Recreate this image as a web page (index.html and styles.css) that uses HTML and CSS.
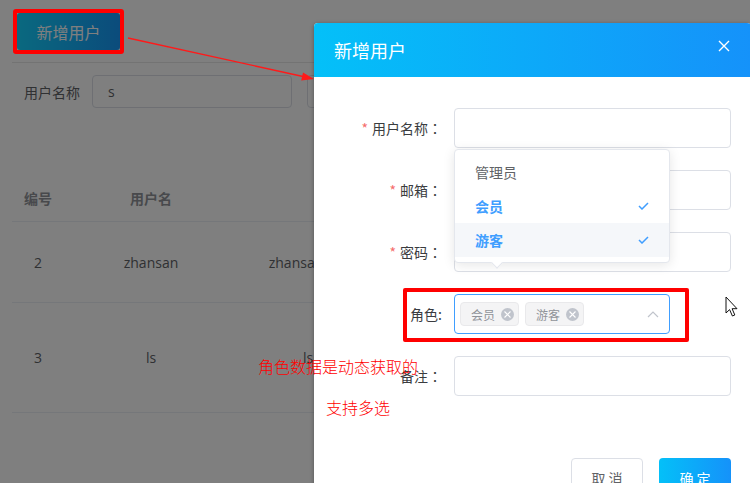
FILE: index.html
```html
<!DOCTYPE html>
<html lang="zh-CN">
<head>
<meta charset="utf-8">
<title>用户管理 - 新增用户</title>
<link rel="stylesheet" href="styles.css">
</head>
<body>
<div class="screen">
  <div class="page">
    <div class="toolbar">
      <button class="btn-add">新增用户</button>
    </div>
    <div class="filter">
      <span class="filter-label">用户名称</span>
      <div class="filter-input">s</div>
      <div class="filter-input filter-input-next"></div>
    </div>
    <div class="table">
      <div class="tr th">
        <div class="td c1">编号</div>
        <div class="td c2">用户名</div>
        <div class="td c3"></div>
      </div>
      <div class="tr row-a">
        <div class="td c1">2</div>
        <div class="td c2">zhansan</div>
        <div class="td c3">zhansan123</div>
      </div>
      <div class="tr row-b">
        <div class="td c1">3</div>
        <div class="td c2">ls</div>
        <div class="td c3">ls</div>
      </div>
    </div>
  </div>

  <div class="mask"></div>

  <div class="btn-box"></div>
  <svg class="annot-arrow" width="320" height="90" viewBox="0 0 320 90">
    <line x1="128" y1="38" x2="303" y2="76.5" stroke="#ff1a1a" stroke-width="1.3"/>
    <polygon points="314,79 301.2,80.4 303.0,72.4" fill="#ff1a1a"/>
  </svg>

  <div class="dialog">
    <div class="dialog-header">
      <span class="dialog-title">新增用户</span>
      <svg class="dialog-close" width="12" height="12" viewBox="0 0 12 12">
        <path d="M1 1 L11 11 M11 1 L1 11" stroke="#fff" stroke-width="1.4" fill="none"/>
      </svg>
    </div>
    <div class="dialog-body">
      <div class="form-item">
        <label class="form-label"><span class="req">*</span>用户名称<span class="colon" lang="zh-TW">：</span></label>
        <div class="form-content"><div class="input"></div></div>
      </div>
      <div class="form-item">
        <label class="form-label"><span class="req">*</span>邮箱<span class="colon" lang="zh-TW">：</span></label>
        <div class="form-content"><div class="input"></div></div>
      </div>
      <div class="form-item">
        <label class="form-label"><span class="req">*</span>密码<span class="colon" lang="zh-TW">：</span></label>
        <div class="form-content"><div class="input"></div></div>
      </div>
      <div class="form-item">
        <label class="form-label">角色:</label>
        <div class="form-content">
          <div class="select">
            <span class="tag">会员<span class="tag-close"><svg width="7" height="7" viewBox="0 0 7 7"><path d="M0.5 0.5 L6.5 6.5 M6.5 0.5 L0.5 6.5" stroke="#fff" stroke-width="1.1"/></svg></span></span>
            <span class="tag">游客<span class="tag-close"><svg width="7" height="7" viewBox="0 0 7 7"><path d="M0.5 0.5 L6.5 6.5 M6.5 0.5 L0.5 6.5" stroke="#fff" stroke-width="1.1"/></svg></span></span>
            <svg class="chevron" width="12" height="8" viewBox="0 0 12 8"><path d="M1 7 L6 2 L11 7" stroke="#c0c4cc" stroke-width="1.2" fill="none"/></svg>
          </div>
        </div>
      </div>
      <div class="form-item">
        <label class="form-label">备注<span class="colon" lang="zh-TW">：</span></label>
        <div class="form-content"><div class="input"></div></div>
      </div>
    </div>
    <div class="dialog-footer">
      <button class="btn btn-cancel">取 消</button>
      <button class="btn btn-ok">确 定</button>
    </div>

    <div class="dropdown">
      <div class="dd-item">管理员</div>
      <div class="dd-item selected">会员<svg class="check" width="11" height="8" viewBox="0 0 11 8"><path d="M1 4 L4 7 L10 1" stroke="#409eff" stroke-width="1.5" fill="none"/></svg></div>
      <div class="dd-item selected hover">游客<svg class="check" width="11" height="8" viewBox="0 0 11 8"><path d="M1 4 L4 7 L10 1" stroke="#409eff" stroke-width="1.5" fill="none"/></svg></div>
      <span class="dd-arrow"></span>
    </div>
  </div>

  <div class="role-box"></div>
  <div class="note note-1">角色数据是动态获取的</div>
  <div class="note note-2">支持多选</div>

  <svg class="cursor" width="14" height="22" viewBox="0 0 14 22">
    <path d="M1 1 L1 17 L4.6 13.6 L7.4 20 L9.8 19 L7.1 12.7 L12 12.7 Z" fill="#fff" stroke="#111" stroke-width="1" stroke-linejoin="round"/>
  </svg>
</div>
</body>
</html>
```

FILE: styles.css
```css
* { box-sizing: border-box; }

html, body {
  margin: 0;
  padding: 0;
  background: #fff;
  overflow: hidden;
}

body {
  font-family: "Open Sans", "Noto Sans CJK SC", sans-serif;
  font-size: 14px;
  color: #606266;
}

.screen {
  position: relative;
  width: 750px;
  height: 483px;
  overflow: hidden;
  background: #fff;
}

/* ---------- background page ---------- */
.page {
  padding-left: 12px;
  width: 750px;
}

.toolbar {
  height: 63px;
  padding: 13px 0 0 5px;
  border-bottom: 1px solid #e6e6e6;
}

.btn-add {
  width: 103px;
  height: 37px;
  border: none;
  border-radius: 3px;
  padding: 0;
  background: linear-gradient(90deg, #14d2ff, #1698f8);
  color: #fff;
  font-family: "Noto Sans CJK SC", sans-serif;
  font-size: 16px;
}

.filter {
  display: flex;
  align-items: center;
  padding: 12px 0 0 12px;
}

.filter-label {
  width: 56px;
  margin-right: 12px;
  color: #606266;
  font-family: "Noto Sans CJK SC", sans-serif;
}

.filter-input {
  width: 200px;
  height: 33px;
  border: 1px solid #dcdfe6;
  border-radius: 4px;
  padding: 0 15px;
  line-height: 31px;
  color: #606266;
}

.filter-input-next { margin-left: 15px; }

.table {
  margin-top: 67px;
  width: 700px;
}

.tr {
  display: flex;
  align-items: center;
  border-bottom: 1px solid #ebeef5;
}

.th { height: 47px; font-weight: bold; font-family: "Noto Sans CJK SC", sans-serif; }
.row-a { height: 81px; }
.row-b { height: 110px; }

.td { text-align: center; color: #606266; }
.th .td { color: #909399; }
.c1 { width: 52px; }
.c2 { width: 174px; }
.c3 { width: 140px; }

.mask {
  position: absolute;
  inset: 0;
  background: rgba(0, 0, 0, 0.5);
}

/* ---------- annotations ---------- */
.btn-box {
  position: absolute;
  left: 13px;
  top: 9px;
  width: 111px;
  height: 45px;
  border: 4px solid #ff0000;
  border-radius: 3px;
}

.annot-arrow {
  position: absolute;
  left: 0;
  top: 0;
}

.role-box {
  position: absolute;
  left: 403px;
  top: 288px;
  width: 286px;
  height: 54px;
  border: 4px solid #ff0000;
  border-radius: 2px;
}

.note {
  position: absolute;
  color: #ff0000;
  font-family: "Noto Sans CJK SC", sans-serif;
  font-weight: 300;
  font-size: 16px;
  line-height: 20px;
  white-space: nowrap;
}

.note-1 { left: 258px; top: 356px; }
.note-2 { left: 326px; top: 397px; }

.cursor {
  position: absolute;
  left: 725px;
  top: 296px;
}

/* ---------- dialog ---------- */
.dialog {
  position: absolute;
  left: 314px;
  top: 23px;
  width: 437px;
  background: #fff;
  border-radius: 4px;
  box-shadow: 0 1px 4px rgba(0, 0, 0, 0.35);
  font-family: "Noto Sans CJK SC", sans-serif;
}

.dialog-header {
  height: 54px;
  display: flex;
  align-items: center;
  justify-content: space-between;
  padding: 0 21px 0 20px;
  border-radius: 4px 4px 0 0;
  background: linear-gradient(90deg, #04c0f8, #1592fa);
}

.dialog-title {
  color: #fff;
  font-size: 18px;
  line-height: 24px;
}

.dialog-close { margin-top: -8px; }

.dialog-body {
  padding: 31px 20px 30px 20px;
}

.form-item {
  display: flex;
  align-items: center;
  margin-bottom: 22px;
}

.form-label {
  width: 120px;
  padding-right: 12px;
  text-align: right;
  color: #3a3c40;
  font-size: 14px;
  line-height: 40px;
}

.colon {
  font-family: "Noto Sans CJK TC", "Noto Sans CJK SC", sans-serif;
}

.req {
  color: #f56c6c;
  margin-right: 4px;
}

.form-content { flex: 1; }

.input {
  height: 40px;
  border: 1px solid #dcdfe6;
  border-radius: 4px;
}

.select {
  width: 216px;
  height: 40px;
  border: 1px solid #409eff;
  border-radius: 4px;
  display: flex;
  align-items: center;
  gap: 6px;
  padding: 0 10px 0 5px;
}

.tag {
  height: 24px;
  display: inline-flex;
  align-items: center;
  padding: 0 4px 0 10px;
  background: #f4f4f5;
  border: 1px solid #e9e9eb;
  border-radius: 4px;
  color: #909399;
  font-size: 12px;
}

.tag-close {
  width: 13px;
  height: 13px;
  margin-left: 6px;
  border-radius: 50%;
  background: #c0c4cc;
  display: inline-flex;
  align-items: center;
  justify-content: center;
}

.chevron { margin-left: auto; }

.dialog-footer {
  display: flex;
  justify-content: flex-end;
  gap: 16px;
  padding: 10px 20px 20px;
}

.btn {
  width: 72px;
  height: 40px;
  border-radius: 4px;
  font-family: "Noto Sans CJK SC", sans-serif;
  font-size: 14px;
  padding: 0;
}

.btn-cancel {
  background: #fff;
  border: 1px solid #dcdfe6;
  color: #606266;
}

.btn-ok {
  border: none;
  background: linear-gradient(90deg, #04c0f8, #1592fa);
  color: #fff;
}

/* ---------- dropdown ---------- */
.dropdown {
  position: absolute;
  left: 140px;
  top: 126px;
  width: 216px;
  padding: 5px 0;
  background: #fff;
  border: 1px solid #e4e7ed;
  border-radius: 4px;
  box-shadow: 0 2px 12px rgba(0, 0, 0, 0.1);
}

.dd-item {
  height: 34px;
  line-height: 34px;
  padding: 0 20px;
  color: #606266;
  display: flex;
  align-items: center;
  justify-content: space-between;
}

.dd-item.selected {
  color: #409eff;
  font-weight: bold;
}

.dd-item.hover { background: #f5f7fa; }

.dd-arrow {
  position: absolute;
  left: 38px;
  bottom: -5px;
  width: 8px;
  height: 8px;
  background: #fff;
  border-right: 1px solid #e4e7ed;
  border-bottom: 1px solid #e4e7ed;
  transform: rotate(45deg);
}
```
